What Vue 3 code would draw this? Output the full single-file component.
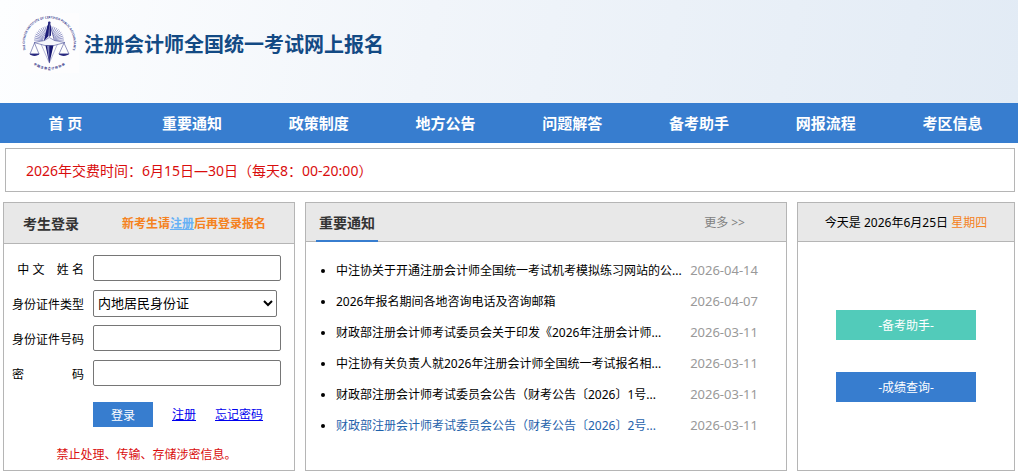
<script setup>
const navItems = ['首 页', '重要通知', '政策制度', '地方公告', '问题解答', '备考助手', '网报流程', '考区信息']

const notices = [
  { title: '中注协关于开通注册会计师全国统一考试机考模拟练习网站的公...', date: '2026-04-14' },
  { title: '2026年报名期间各地咨询电话及咨询邮箱', date: '2026-04-07' },
  { title: '财政部注册会计师考试委员会关于印发《2026年注册会计师...', date: '2026-03-11' },
  { title: '中注协有关负责人就2026年注册会计师全国统一考试报名相...', date: '2026-03-11' },
  { title: '财政部注册会计师考试委员会公告（财考公告〔2026〕1号...', date: '2026-03-11' },
  { title: '财政部注册会计师考试委员会公告（财考公告〔2026〕2号...', date: '2026-03-11', active: true },
]

// Sun rays fanning out above the scale beam
const rays = Array.from({ length: 23 }, (_, i) => {
  const a = (Math.PI * (i + 0.5)) / 23
  const c = Math.cos(a)
  const s = Math.sin(a)
  return { x1: 30 + 6 * c, y1: 28 - 6 * s, x2: 30 + 15 * c, y2: 28 - 15 * s }
})
</script>

<template>
  <div class="page">
    <header class="top">
      <svg class="logo" viewBox="0 0 60 60" role="img" aria-label="中国注册会计师协会">
        <defs>
          <path id="arc-top" d="M9 42A24.500 24.500 0 1 1 51.500 42" />
          <path id="arc-bottom" d="M10.500 48A27 27 0 0 0 50 48" />
        </defs>
        <rect width="60" height="60" fill="#fdfdfe" />
        <text class="ring"><textPath href="#arc-top" startOffset="50%">THE CHINESE INSTITUTE OF CERTIFIED PUBLIC ACCOUNTANTS</textPath></text>
        <text class="ring seal"><textPath href="#arc-bottom" startOffset="50%">中 国 注 册 会 计 师 协 会</textPath></text>
        <g stroke="#7c80bd" stroke-width="0.8">
          <line v-for="(r, i) in rays" :key="i" :x1="r.x1" :y1="r.y1" :x2="r.x2" :y2="r.y2" />
        </g>
        <path d="M30.3 9L35.5 28H25.3z" fill="#fff" stroke="#29297f" stroke-width="0.6" />
        <path d="M30.3 8.5L29.6 23L25 28L28.3 13z" fill="#1c1c78" />
        <path d="M30.3 8.5L32 14V22.500L30.300 24z" fill="#1c1c78" />
        <circle cx="30.3" cy="9.8" r="1.3" fill="#29297f" />
        <path d="M15 29.500L25.500 27.500L30.300 24.500L35.500 27.500L46 29.500L35 32.500H26z" fill="#f4f5fb" stroke="#4c5098" stroke-width="0.6" />
        <path d="M22 31L30.300 50L38.500 31" fill="none" stroke="#6d70b0" stroke-width="0.5" />
        <path d="M26.500 32.500H34.500L30.300 50.500z" fill="#14146f" />
        <path d="M30.300 32.500V50L28 33z" fill="#7d80bd" />
        <g fill="none" stroke="#4c5098" stroke-width="0.6">
          <path d="M15.500 30L11 41H20z" />
          <path d="M45 30L40 41H50z" />
        </g>
        <path d="M10.500 40.800H20.500C19 43.600 12 43.600 10.500 40.800zM39.500 40.800H50C48.500 43.600 41 43.600 39.500 40.800z" fill="#29297f" />
      </svg>
      <h1>注册会计师全国统一考试网上报名</h1>
    </header>

    <nav class="nav">
      <a v-for="item in navItems" :key="item" href="#">{{ item }}</a>
    </nav>

    <p class="banner">2026年交费时间：6月15日—30日（每天8：00-20:00）</p>

    <main class="columns">
      <section class="panel">
        <div class="head login-head">
          <h2>考生登录</h2>
          <span class="tip">新考生请<a href="#">注册</a>后再登录报名</span>
        </div>
        <form class="login" @submit.prevent>
          <div class="row">
            <label for="name">中 文 &nbsp;&nbsp; 姓 名</label>
            <input id="name" type="text" />
          </div>
          <div class="row">
            <label for="idtype">身份证件类型</label>
            <select id="idtype"><option>内地居民身份证</option></select>
          </div>
          <div class="row">
            <label for="idno">身份证件号码</label>
            <input id="idno" type="text" />
          </div>
          <div class="row">
            <label for="pwd" class="spread">密 码</label>
            <input id="pwd" type="password" />
          </div>
          <div class="actions">
            <button type="submit">登录</button>
            <a href="#">注册</a>
            <a href="#">忘记密码</a>
          </div>
          <p class="warning">禁止处理、传输、存储涉密信息。</p>
        </form>
      </section>

      <section class="panel">
        <div class="head news-head">
          <h2>重要通知</h2>
          <a href="#" class="more">更多 &gt;&gt;</a>
        </div>
        <ul class="news">
          <li v-for="n in notices" :key="n.title">
            <a href="#" :class="{ active: n.active }">{{ n.title }}</a>
            <time>{{ n.date }}</time>
          </li>
        </ul>
      </section>

      <section class="panel">
        <div class="head date-head">
          <span>今天是 2026年6月25日 <em>星期四</em></span>
        </div>
        <div class="quick">
          <button type="button" class="helper">-备考助手-</button>
          <button type="button">-成绩查询-</button>
        </div>
      </section>
    </main>
  </div>
</template>

<style>
body {
  background: #fff;
}
</style>

<style scoped>
.page {
  font-family: "Noto Sans", "Noto Sans CJK SC", sans-serif;
  font-size: 12px;
  line-height: 20px;
  color: #000;
}
.page * {
  box-sizing: border-box;
}
h1,
h2,
p,
ul {
  margin: 0;
  padding: 0;
}
input,
select,
button {
  font-family: inherit;
  margin: 0;
}
.top {
  display: flex;
  align-items: flex-start;
  gap: 5px;
  height: 103px;
  padding: 13px 19px;
  background: linear-gradient(100deg, #fdfeff 0%, #f1f5fa 42%, #e2ebf5 100%);
}
.logo {
  width: 60px;
  height: 60px;
}
.ring {
  font-size: 3px;
  font-weight: 700;
  text-anchor: middle;
  fill: #3a3d90;
}
.seal {
  fill: #29297f;
}
h1 {
  font-size: 20px;
  line-height: 64px;
  color: #134a84;
}
.nav {
  display: flex;
  padding: 0 2px;
  background: #377dcf;
}
.nav a {
  flex: 1;
  font-size: 15px;
  font-weight: 700;
  line-height: 40px;
  text-align: center;
  color: #fff;
  text-decoration: none;
}
.banner {
  margin: 5px 3px 10px 5px;
  padding: 1px 20px 0;
  border: 1px solid #b5b5b5;
  font-size: 14px;
  line-height: 41px;
  color: #d90d0d;
}
.columns {
  display: grid;
  grid-template-columns: minmax(0, 292fr) minmax(0, 482fr) minmax(0, 218fr);
  gap: 10px;
  padding: 0 3px;
}
.panel {
  border: 1px solid #b5b5b5;
}
.head {
  display: flex;
  align-items: center;
  height: 39px;
  padding-top: 2px;
  border-bottom: 1px solid #b5b5b5;
  background: #e8e8e8;
  white-space: nowrap;
}
h2 {
  font-size: 14px;
  line-height: 20px;
  color: #333;
}
.login-head {
  height: 41px;
  padding: 2px 28px 0 19px;
  justify-content: space-between;
}
.tip {
  font-weight: 700;
  color: #f58220;
}
.tip a {
  color: #66b1f5;
}
.login {
  padding: 11px 13px 5px 8px;
}
.row {
  display: flex;
  align-items: center;
  gap: 9px;
  height: 26px;
  margin-bottom: 9px;
}
.row label {
  flex: none;
  width: 72px;
  padding-top: 3px;
  text-align: right;
  white-space: nowrap;
}
.row .spread {
  text-align-last: justify;
}
.row input {
  flex: 1;
  min-width: 0;
  height: 26px;
  border: 1px solid #767676;
  border-radius: 2px;
  background: #fff;
}
.row select {
  flex: 1;
  min-width: 0;
  height: 27px;
  margin-right: 4px;
  padding: 0;
  border: 1px solid #767676;
  border-radius: 2px;
  background: #fff;
  font-size: 13px;
  color: #000;
}
.actions {
  display: flex;
  align-items: center;
  gap: 19px;
  margin: 16px 0 0 81px;
  white-space: nowrap;
}
.actions button {
  width: 60px;
  height: 25px;
  padding: 0;
  border: 0;
  background: #377dcf;
  color: #fff;
  font-size: 12px;
}
.actions a {
  color: #00e;
}
.warning {
  margin-top: 18px;
  text-align: center;
  color: #d90d0d;
}
.news-head {
  padding: 0 41px 0 10px;
  justify-content: space-between;
}
.news-head h2 {
  align-self: stretch;
  margin-bottom: -1px;
  padding: 0 3px;
  border-bottom: 2px solid #377dcf;
  line-height: 40px;
}
.more {
  padding-top: 2px;
  color: #808080;
  text-decoration: none;
}
.news {
  padding: 13px 28px 0 30px;
  list-style: disc;
}
.news li {
  line-height: 31px;
  white-space: nowrap;
}
.news a {
  color: #000;
  text-decoration: none;
}
.news .active {
  color: #1f62ab;
}
.news time {
  float: right;
  font-size: 13px;
  color: #999;
}
.date-head {
  justify-content: center;
}
.date-head em {
  font-style: normal;
  color: #f58220;
}
.quick {
  display: flex;
  flex-direction: column;
  align-items: center;
  gap: 32px;
  padding-top: 68px;
}
.quick button {
  width: 140px;
  height: 30px;
  padding: 0;
  border: 0;
  background: #377dcf;
  color: #fff;
  font-size: 12px;
}
.quick .helper {
  background: #52cbba;
}
</style>
